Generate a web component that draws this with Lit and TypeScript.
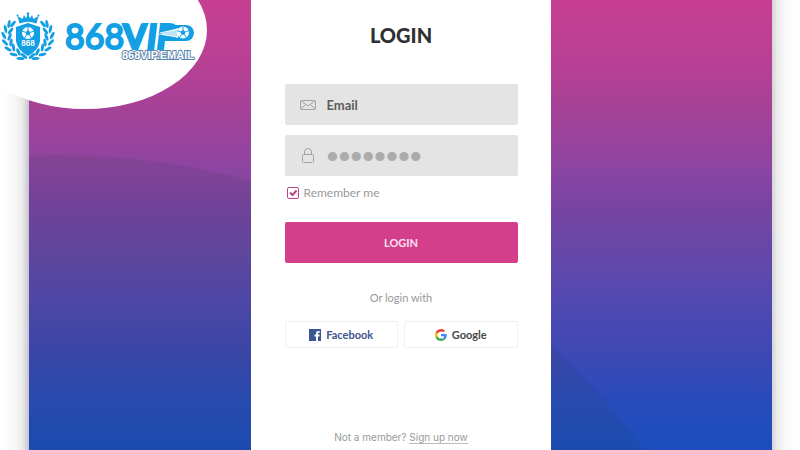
import { LitElement, html, css, svg } from "lit";
import { customElement, state } from "lit/decorators.js";

const leaf = (x: number, y: number, angle: number) =>
  svg`<ellipse rx="1.5" ry="4" transform="translate(${x} ${y}) rotate(${angle})"></ellipse>`;

const branch = [
  [13, 24, 38], [9, 24, 10],
  [5.5, 29, -12], [10.5, 31, 38],
  [3.8, 35.5, -28], [9.6, 37, 22],
  [5, 42.5, -44], [11, 42.5, 8],
  [8, 49, -60], [13.5, 47.5, -8],
  [13.5, 54.5, -76], [18.5, 52, -26],
  [20.5, 58.5, -88], [24, 56, -50],
];

@customElement("brand-logo")
export class BrandLogo extends LitElement {
  static styles = css`
    :host { display: block; }
    .logo { display: block; width: 200px; height: 70px; }
    .blue { fill: #139fe4; }
    .number { font: 400 34px Lato, sans-serif; fill: #139fe4; stroke: #139fe4; stroke-width: 2; }
    .vip { font: 900 34px Lato, sans-serif; fill: #139fe4; stroke: #139fe4; stroke-width: 2; }
    .slant { font-style: italic; }
    .small { font: 700 7px Inter, sans-serif; fill: #fff; }
    .site { font: 700 11px "Liberation Sans", sans-serif; fill: #fff; stroke: #5a86ad; stroke-width: 2; paint-order: stroke; }
  `;

  render() {
    return html`
      <svg class="logo" viewBox="0 0 200 70" role="img" aria-label="868VIP.EMAIL">
        <g class="blue">
          ${branch.map(([x, y, a]) => leaf(x, y, a))}
          <g transform="translate(56 0) scale(-1 1)">${branch.map(([x, y, a]) => leaf(x, y, a))}</g>
          <path d="M19.500 23.500L17.500 16L22.500 19L24 15L26 18.500L28 13L30 18.500L32 15L33.500 19L38.500 16L36.500 23.500Q28 20 19.500 23.500Z"></path>
          <circle cx="28" cy="13.500" r="1.300"></circle>
          <circle cx="17.500" cy="15.500" r="1"></circle>
          <circle cx="38.500" cy="15.500" r="1"></circle>
          <path d="M28 23L40 27V41Q39 50 28 56Q17 50 16 41V27Z"></path>
        </g>
        <circle cx="28" cy="33" r="6" fill="#fff"></circle>
        <path class="blue" d="M28 30.300L30.600 32.200L29.600 35.200H26.400L25.400 32.200Z"></path>
        <path d="M28 31V27M30.600 32.200L33.800 31.300M29.600 35.200L31.400 38M26.400 35.200L24.600 38M25.400 32.200L22.200 31.300" stroke="#139fe4" stroke-width="1"></path>
        <text class="small" x="28" y="46" text-anchor="middle">868</text>
        <text class="number" x="65" y="49">868</text>
        <text class="vip" x="123" y="49">V<tspan class="slant">IP</tspan></text>
        <rect x="161" y="25" width="33" height="16" rx="8" fill="#139fe4"></rect>
        <path d="M157 35L178 28V38Q168 34 157 35Z" fill="#bce4f7"></path>
        <path d="M160 33L178 29M162 34.500L178 37" stroke="#fff" stroke-width="1"></path>
        <circle cx="183" cy="32.500" r="6" fill="#fff"></circle>
        <path class="blue" d="M183 29.800L185.600 31.700L184.600 34.700H181.400L180.400 31.700Z"></path>
        <path d="M183 30V26.500M185.600 31.700L188.700 30.800M184.600 34.700L186.400 37.500M181.400 34.700L179.600 37.500M180.400 31.700L177.300 30.800" stroke="#139fe4" stroke-width="1"></path>
        <text class="site" x="122" y="59">868VIP.EMAIL</text>
      </svg>
    `;
  }
}

@customElement("app-root")
export class AppRoot extends LitElement {
  @state() private remember = true;

  static styles = css`
    :host {
      display: block;
      position: relative;
      overflow: hidden;
      background: #fefefe;
      font-family: Lato, "Open Sans", sans-serif;
    }
    * { box-sizing: border-box; }
    .page { display: flex; min-height: 100vh; }
    .page::before, .page::after { content: ""; flex: 0 0 27px; }
    .page::after { flex-basis: 28px; }
    .page::before { background: linear-gradient(to left, #d3d3d3, #ebebeb 5px, #f8f8f8 13px, #fefefe 24px); }
    .page::after { background: linear-gradient(to right, #d3d3d3, #ebebeb 5px, #f8f8f8 13px, #fefefe 24px); }
    .stage {
      flex: 1;
      position: relative;
      overflow: hidden;
      display: flex;
      justify-content: center;
      border-left: 2px solid #cdc6dc;
      background: linear-gradient(#c83f92 0%, #b94094 13%, #a44298 25%, #8b45a2 38%, #7644a3 47%, #6648a8 56%, #5249b2 67%, #3e48b3 78%, #284cbb 89%, #1b4dbe 100%);
    }
    .hill {
      position: absolute;
      left: -698px;
      top: 155px;
      width: 1456px;
      height: 1456px;
      border-radius: 50%;
      background: rgba(40, 60, 60, 0.1);
    }
    .card {
      position: relative;
      display: flex;
      flex-direction: column;
      width: 300px;
      padding: 22px 33px 6px 34px;
      background: #fff;
    }
    h1 { margin: 0 0 36px; font-size: 20px; line-height: 26px; font-weight: 900; text-align: center; color: #303030; }
    form { display: flex; flex-direction: column; }
    .field {
      display: flex;
      align-items: center;
      height: 41px;
      margin-bottom: 10px;
      padding-left: 14px;
      gap: 10px;
      border-radius: 2px;
      background: #e4e4e4;
    }
    .field svg { flex: none; width: 18px; height: 18px; fill: none; stroke: #a2a2a2; stroke-width: 1; }
    .field input {
      flex: 1;
      min-width: 0;
      padding: 0;
      border: 0;
      outline: 0;
      background: none;
      color: #5c5c5c;
      font: 700 13px/20px Lato, sans-serif;
    }
    .field input::placeholder { color: #5c5c5c; opacity: 1; }
    .field input.secret { color: #acacac; font: 400 34px/40px "Liberation Sans", sans-serif; }
    .remember { display: flex; align-items: center; gap: 5px; height: 14px; padding-left: 2px; font-size: 12px; line-height: 14px; color: #999; }
    .tick { display: grid; width: 12px; height: 12px; }
    .tick input { grid-area: 1 / 1; appearance: none; width: 12px; height: 12px; margin: 0; border: 1px solid #c0428b; border-radius: 2px; }
    .tick svg { grid-area: 1 / 1; width: 12px; height: 12px; pointer-events: none; fill: none; stroke: #c0428b; stroke-width: 2; }
    button { font-family: inherit; cursor: pointer; }
    .submit { height: 41px; margin-top: 22px; border: 0; border-radius: 2px; background: #d33f8b; color: #fbe3f0; font-size: 11px; font-weight: 700; }
    .or { margin: 28px 0 16px; font-size: 11px; line-height: 14px; text-align: center; color: #999; }
    .social { display: grid; grid-template-columns: 1fr 1fr; gap: 6px; }
    .social button {
      display: flex;
      align-items: center;
      justify-content: center;
      gap: 5px;
      height: 27px;
      padding: 0;
      border: 1px solid #f0f0f0;
      border-radius: 2px;
      background: #fff;
      color: #484848;
      font-size: 11px;
      font-weight: 700;
    }
    .social .facebook { color: #41558f; }
    .social svg { width: 12px; height: 12px; }
    .join { margin: auto 0 0; font: 10px/14px Inter, sans-serif; text-align: center; color: #999; }
    .join a { display: inline-block; color: inherit; text-decoration: none; border-bottom: 1px solid #bbb; line-height: 12px; }
    .badge {
      position: absolute;
      left: -37px;
      top: -49px;
      width: 244px;
      height: 158px;
      padding: 49px 0 0 37px;
      border-radius: 50%;
      background: #fff;
    }
  `;

  render() {
    return html`
      <div class="page">
        <main class="stage">
          <div class="hill"></div>
          <section class="card">
            <h1>LOGIN</h1>
            <form @submit=${(e: Event) => e.preventDefault()}>
              <label class="field">
                <svg viewBox="0 0 18 18" aria-hidden="true">
                  <rect x="1.500" y="4.500" width="15" height="9" rx="1"></rect>
                  <path d="M2 5L9 10L16 5M2 13L6.500 8.500M16 13L11.500 8.500"></path>
                </svg>
                <input type="email" placeholder="Email" aria-label="Email" />
              </label>
              <label class="field">
                <svg viewBox="0 0 18 18" aria-hidden="true">
                  <rect x="3.500" y="7.500" width="11" height="8" rx="1"></rect>
                  <path d="M5.500 7.500V5A3.500 3.500 0 0 1 12.500 5V7.500"></path>
                </svg>
                <input class="secret" type="password" value="password" aria-label="Password" />
              </label>
              <label class="remember">
                <span class="tick">
                  <input
                    type="checkbox"
                    .checked=${this.remember}
                    @change=${(e: Event) => (this.remember = (e.target as HTMLInputElement).checked)}
                  />
                  ${this.remember
                    ? html`<svg viewBox="0 0 12 12" aria-hidden="true"><path d="M3 5.500L5.500 8L9.500 3.500"></path></svg>`
                    : null}
                </span>
                Remember me
              </label>
              <button class="submit" type="submit">LOGIN</button>
            </form>
            <p class="or">Or login with</p>
            <div class="social">
              <button class="facebook" type="button">
                <svg viewBox="0 0 12 12" aria-hidden="true">
                  <rect width="12" height="12" fill="#3b5595"></rect>
                  <path d="M7 12V7.500H5.500V5.600H7V4.200Q7 2 9.200 2H10.700V3.800H9.700Q9 3.800 9 4.500V5.600H10.700L10.400 7.500H9V12Z" fill="#fff"></path>
                </svg>
                Facebook
              </button>
              <button type="button">
                <svg viewBox="0 0 48 48" aria-hidden="true">
                  <path fill="#EA4335" d="M24 9.500c3.540 0 6.710 1.220 9.210 3.600l6.850-6.850C35.900 2.380 30.470 0 24 0 14.620 0 6.510 5.380 2.560 13.220l7.980 6.190C12.430 13.720 17.740 9.500 24 9.500z"></path>
                  <path fill="#4285F4" d="M46.980 24.550c0-1.570-.150-3.090-.380-4.550H24v9.020h12.940c-.580 2.960-2.260 5.480-4.780 7.180l7.730 6c4.510-4.180 7.090-10.360 7.090-17.650z"></path>
                  <path fill="#FBBC05" d="M10.530 28.590c-.480-1.450-.760-2.990-.760-4.590s.270-3.140.760-4.590l-7.980-6.190C.92 16.460 0 20.120 0 24s.92 7.540 2.560 10.780l7.970-6.190z"></path>
                  <path fill="#34A853" d="M24 48c6.480 0 11.930-2.130 15.890-5.810l-7.730-6c-2.150 1.450-4.920 2.300-8.160 2.300-6.260 0-11.570-4.220-13.470-9.910l-7.980 6.190C6.510 42.620 14.620 48 24 48z"></path>
                </svg>
                Google
              </button>
            </div>
            <p class="join">Not a member? <a href="#signup">Sign up now</a></p>
          </section>
        </main>
      </div>
      <header class="badge"><brand-logo></brand-logo></header>
    `;
  }
}
